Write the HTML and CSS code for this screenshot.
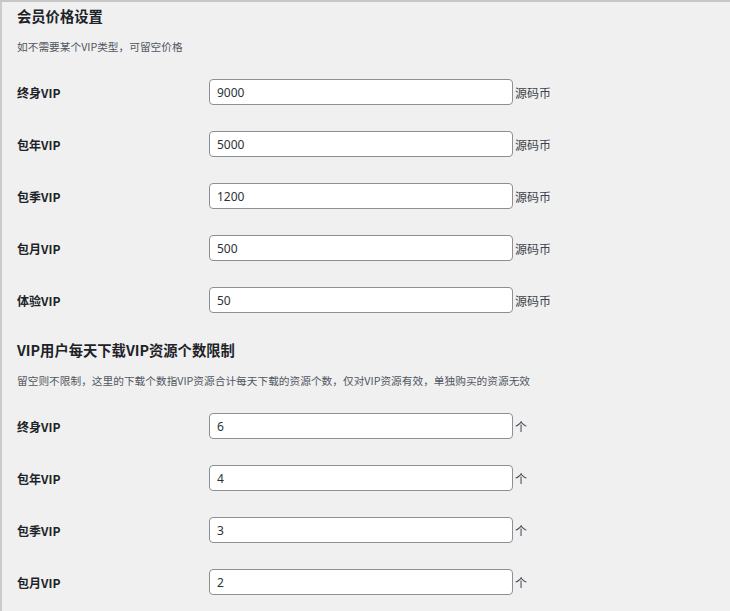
FILE: index.html
```html
<!DOCTYPE html>
<html lang="zh-CN">
<head>
<meta charset="utf-8">
<title>会员价格设置</title>
<link rel="stylesheet" href="styles.css">
</head>
<body>
<div class="wrap">
  <section class="group">
    <h2 class="title">会员价格设置</h2>
    <p class="desc">如不需要某个VIP类型，可留空价格</p>
    <div class="rows">
      <div class="row"><label class="lbl">终身VIP</label><div class="field"><input class="inp" type="text" value="9000"><span class="unit">源码币</span></div></div>
      <div class="row"><label class="lbl">包年VIP</label><div class="field"><input class="inp" type="text" value="5000"><span class="unit">源码币</span></div></div>
      <div class="row"><label class="lbl">包季VIP</label><div class="field"><input class="inp" type="text" value="1200"><span class="unit">源码币</span></div></div>
      <div class="row"><label class="lbl">包月VIP</label><div class="field"><input class="inp" type="text" value="500"><span class="unit">源码币</span></div></div>
      <div class="row"><label class="lbl">体验VIP</label><div class="field"><input class="inp" type="text" value="50"><span class="unit">源码币</span></div></div>
    </div>
  </section>
  <section class="group group-next">
    <h2 class="title">VIP用户每天下载VIP资源个数限制</h2>
    <p class="desc">留空则不限制，这里的下载个数指VIP资源合计每天下载的资源个数，仅对VIP资源有效，单独购买的资源无效</p>
    <div class="rows">
      <div class="row"><label class="lbl">终身VIP</label><div class="field"><input class="inp" type="text" value="6"><span class="unit">个</span></div></div>
      <div class="row"><label class="lbl">包年VIP</label><div class="field"><input class="inp" type="text" value="4"><span class="unit">个</span></div></div>
      <div class="row"><label class="lbl">包季VIP</label><div class="field"><input class="inp" type="text" value="3"><span class="unit">个</span></div></div>
      <div class="row"><label class="lbl">包月VIP</label><div class="field"><input class="inp" type="text" value="2"><span class="unit">个</span></div></div>
    </div>
  </section>
</div>
</body>
</html>
```
FILE: styles.css
```css
html, body {
  margin: 0;
  padding: 0;
  background: #f0f0f1;
}
body {
  font-family: "Noto Sans CJK SC", "Noto Sans", sans-serif;
  color: #1d2327;
  overflow: hidden;
}
.wrap {
  box-sizing: border-box;
  min-height: 611px;
  border-top: 2px solid #c6c6c6;
  border-left: 2px solid #cbcbcb;
  padding: 4px 0 0 15px;
  background: #f0f0f1;
}
.title {
  margin: 0;
  font-size: 14.3px;
  line-height: 20px;
  font-weight: 700;
  color: #1d2327;
}
.group-next {
  margin-top: 14px;
}
.desc {
  margin: 13px 0 0;
  font-size: 10.7px;
  line-height: 16px;
  color: #50575e;
}
.rows {
  margin-top: 11px;
}
.row {
  display: grid;
  grid-template-columns: 192px auto;
  align-items: center;
  height: 52px;
}
.lbl {
  font-size: 12px;
  font-weight: 700;
  color: #1d2327;
}
.field {
  display: flex;
  align-items: center;
}
.inp {
  box-sizing: border-box;
  width: 304px;
  height: 26px;
  margin: 0;
  padding: 0 7px;
  border: 1px solid #8c8f94;
  border-radius: 4px;
  background: #fff;
  font-family: "Noto Sans", "Noto Sans CJK SC", sans-serif;
  font-size: 12px;
  color: #2c3338;
  outline: none;
}
.unit {
  margin-left: 2px;
  font-size: 12px;
  color: #3c434a;
}
```
